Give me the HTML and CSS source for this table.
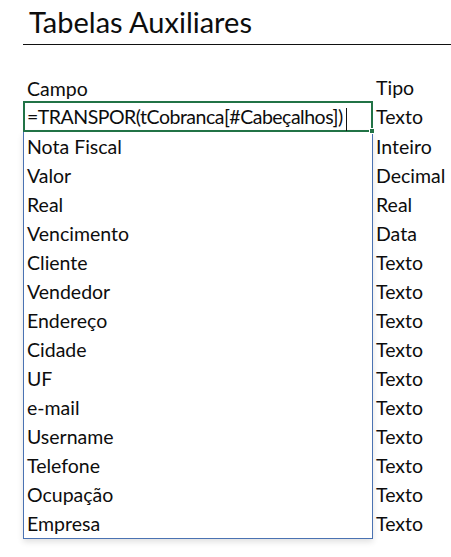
FILE: index.html
```html
<!DOCTYPE html>
<html lang="pt">
<head>
<meta charset="utf-8">
<link rel="stylesheet" href="styles.css">
</head>
<body>
<div class="page">
  <h1 class="title">Tabelas Auxiliares</h1>
  <div class="sheet">
    <div class="row header">
      <div class="campo">Campo</div>
      <div class="tipo">Tipo</div>
    </div>
    <div class="row formula-row">
      <div class="campo editing">=TRANSPOR(tCobranca[#Cabeçalhos])<span class="caret"></span><span class="handle"></span></div>
      <div class="tipo">Texto</div>
    </div>
    <div class="spill-wrap">
      <div class="spill">
        <div class="row"><div class="campo">Nota Fiscal</div></div>
        <div class="row"><div class="campo">Valor</div></div>
        <div class="row"><div class="campo">Real</div></div>
        <div class="row"><div class="campo">Vencimento</div></div>
        <div class="row"><div class="campo">Cliente</div></div>
        <div class="row"><div class="campo">Vendedor</div></div>
        <div class="row"><div class="campo">Endereço</div></div>
        <div class="row"><div class="campo">Cidade</div></div>
        <div class="row"><div class="campo">UF</div></div>
        <div class="row"><div class="campo">e-mail</div></div>
        <div class="row"><div class="campo">Username</div></div>
        <div class="row"><div class="campo">Telefone</div></div>
        <div class="row"><div class="campo">Ocupação</div></div>
        <div class="row"><div class="campo">Empresa</div></div>
      </div>
      <div class="types">
        <div class="tipo">Inteiro</div>
        <div class="tipo">Decimal</div>
        <div class="tipo">Real</div>
        <div class="tipo">Data</div>
        <div class="tipo">Texto</div>
        <div class="tipo">Texto</div>
        <div class="tipo">Texto</div>
        <div class="tipo">Texto</div>
        <div class="tipo">Texto</div>
        <div class="tipo">Texto</div>
        <div class="tipo">Texto</div>
        <div class="tipo">Texto</div>
        <div class="tipo">Texto</div>
        <div class="tipo">Texto</div>
      </div>
    </div>
  </div>
</div>
</body>
</html>
```
FILE: styles.css
```css
* { box-sizing: border-box; }
html, body { margin: 0; padding: 0; background: #fff; }
body {
  font-family: Lato, "Open Sans", sans-serif;
  color: #0d0d0d;
  width: 451px;
  height: 557px;
  overflow: hidden;
}
.page { padding-left: 23px; }
.title {
  margin: 0;
  font-weight: 400;
  font-size: 29px;
  line-height: 44px;
  height: 45px;
  padding-left: 6px;
  padding-top: 0;
  border-bottom: 1.5px solid #111;
}
.sheet {
  margin-top: 27px;
  font-size: 19.5px;
}
.row {
  display: flex;
  height: 29px;
  align-items: center;
}
.header { padding-top: 3px; }
.header .tipo { line-height: 26px; height: 26px; }
.campo {
  width: 350px;
  padding-left: 4px;
  white-space: nowrap;
}
.tipo {
  padding-left: 3px;
  height: 29px;
  line-height: 29px;
}
.formula-row { height: 31px; }
.editing {
  position: relative;
  height: 31px;
  line-height: 27px;
  border: 2px solid #217346;
  padding-left: 2px;
  letter-spacing: -0.5px;
}
.caret {
  display: inline-block;
  width: 1px;
  height: 23px;
  background: #111;
  vertical-align: middle;
  margin-left: 3px;
}
.handle {
  position: absolute;
  right: -4px;
  bottom: -4px;
  width: 6px;
  height: 6px;
  background: #217346;
  border: 1px solid #fff;
}
.spill-wrap { display: flex; }
.spill {
  width: 350px;
  border: 1px solid #4a72b2;
  border-top: none;
  box-shadow: 0 3px 6px rgba(0,0,0,0.12);
}
.spill .campo { width: auto; padding-left: 3px; }
.types { display: flex; flex-direction: column; }
```
